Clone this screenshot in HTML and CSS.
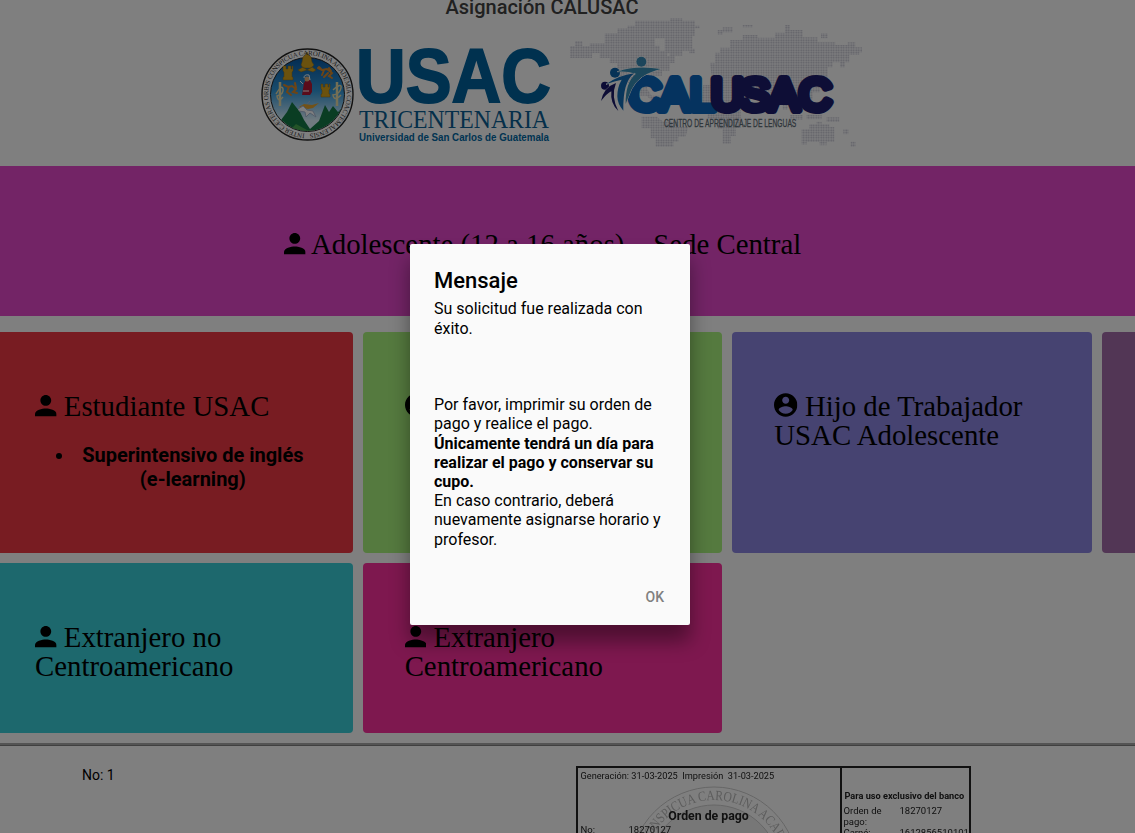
FILE: index.html
```html
<!DOCTYPE html>
<html lang="es">
<head>
<meta charset="utf-8">
<title>Asignación CALUSAC</title>
<link rel="stylesheet" href="styles.css">
</head>
<body>
<svg class="defs" width="0" height="0">
  <symbol id="person" viewBox="64 64 384 384"><path d="M256 256c52.805 0 96-43.201 96-96s-43.195-96-96-96-96 43.201-96 96 43.195 96 96 96zm0 48c-63.598 0-192 32.402-192 96v48h384v-48c0-63.598-128.402-96-192-96z"/></symbol>
  <symbol id="contact" viewBox="48 48 416 416"><path d="M256 48C141.1 48 48 141.1 48 256s93.1 208 208 208 208-93.1 208-208S370.9 48 256 48zm0 62.4c34.4 0 62.4 28 62.4 62.4s-28 62.4-62.4 62.4-62.4-28-62.4-62.4 28-62.4 62.4-62.4zm0 300.4c-52 0-97.8-26.7-124.6-67 .6-41.3 83.1-64 124.6-64s124 22.7 124.6 64c-26.8 40.3-72.6 67-124.6 67z"/></symbol>
</svg>
<main class="page">
  <header class="header">
    <h1 class="title">Asignación CALUSAC</h1>
    <div class="logos">
      <svg class="logo-usac" viewBox="258 44 296 100">
        <defs>
          <linearGradient id="sky" x1="0" y1="0" x2="0" y2="1"><stop offset="0" stop-color="#0759a5"/><stop offset=".45" stop-color="#3198da"/><stop offset=".85" stop-color="#e0f5ff"/></linearGradient>
          <path id="ring" d="M307.5 133.8a39.3 39.3 0 1 1 .1 0"/>
          <clipPath id="seal"><circle cx="307.5" cy="94.5" r="36.5"/></clipPath>
        </defs>
        <circle cx="307.5" cy="94.5" r="45.5" fill="#fff" stroke="#222" stroke-width="1.4"/>
        <circle cx="307.5" cy="94.5" r="37" fill="url(#sky)" stroke="#222"/>
        <g clip-path="url(#seal)">
          <path d="M272 132l15-20 5-10 8 10 4 8 6 9 9-8 6-16 4 7 4-6 5 6 3-3 8 12v20h-77z" fill="#157a46"/>
          <path d="M286 134l10-10 11 6 9 1-8 7h-15z" fill="#48a851"/>
        </g>
        <g fill="#d6a51c" stroke="#8c681c" stroke-width=".5">
          <path d="M302 62l1-5 3-3 1-2 1 2 3 3 1 5 2 3-3 3h-8l-2-3zM298 70l5-3 4 3 5-3 4 3-3 2-6-2-6 2z"/>
          <path d="M284 66h2v3h2v-3h3v3h1v-3h1v5l-1 1v5h1v3h-10v-3h1v-5l-1-1v-5zM321 84h2v3h2v-3h3v3h1v-3h1v5l-1 1v4h1v3h-9v-3h1v-4l-1-1z"/>
        </g>
        <g fill="none" stroke="#db8929" stroke-width="2" stroke-linecap="round">
          <path d="M318 68l4 2 5-1 5 4-3 3 3 2M324 70l-2 5M328 73l-4 4M319 67l2 2M329 68l2 3M284 85l4 2 4-1 4 3-3 3 4 1M289 87l-2 5 4 3M295 83l1 5"/>
        </g>
        <path d="M304 83l2-3h4l2 4v8l-2 3h-8l1-6z" fill="#b51837"/>
        <circle cx="307" cy="79" r="2.5" fill="#dfb17f"/><path d="M304 78q0-4 5-3l1 5M303 84l-3-3M303 91h6" fill="none" stroke="#fff" stroke-width="1"/>
        <path d="M299 107l5-3 8 1 7-2-6 5-5 1z" fill="#e5a52e"/><path d="M298 109l5-3 4 4 6 1 3 6-6-4-4 4-1-5-6-1M307 104l3-3" fill="#fff" stroke="#a5b8d5" stroke-width="1"/>
        <g fill="none" stroke="#e8deaa" stroke-width="2.500"><path d="M280 82v24M337 82v24"/><path d="M276 94q6-10 7-5t-6 7q1 7 6 1M333 90q9-8 8-2t-8 7q1 7 8 0" stroke-width="1.500"/></g>
        <text class="seal-text"><textPath href="#ring" startOffset="3" textLength="241">INTER CÆTERAS ORBIS CONSPICUA CAROLINA ACADEMIA COACTEMALENSIS</textPath></text>
        <text class="usac" x="356" y="102" textLength="195" lengthAdjust="spacingAndGlyphs">USAC</text>
        <text class="tri" x="359" y="127.500" textLength="190" lengthAdjust="spacingAndGlyphs">TRICENTENARIA</text>
        <text class="univ" x="359" y="141" textLength="190" lengthAdjust="spacingAndGlyphs">Universidad de San Carlos de Guatemala</text>
      </svg>
      <svg class="logo-cal" viewBox="18 54 900 390">
        <defs><pattern id="dots" x="30" y="57" width="7.500" height="7.500" patternUnits="userSpaceOnUse"><rect width="7.500" height="7.500" fill="#fafafe"/><circle cx="3.700" cy="3.700" r="2.600" fill="#bdbdca"/></pattern></defs>
        <g fill="url(#dots)">
          <path d="M30 138h15v-15h22v15h22v-8h45v-30h38v-15h30v-8h23v-15h105v-8h37v8h38v15h14v8h-14v22h-8v45h-30v15h-23v15h-15v-22h-15v-45h-30v22h15v15h22v15h23v22h-15v23h-23v15h-22v22h-23v22h-37l-15-22h-23l-15-30v-30h-22v-15h-30v-15h-23v15H30z"/>
          <path d="M230 265h30l15 22h30v15h-30l-15-15h-22z"/>
          <path d="M245 350h45l20 15h45v15h30l-8 30h-22v15h-15v15h-53v-25h-15v-30h-27z"/>
          <path d="M387 146h18v14h-18zM473 90h15v-8h30v15h-30v7h-15zM548 75h30v7h-30zM783 100h20v15h-20z"/>
          <path d="M450 188h15v-30h15v-15h30v-23h38v-15h45v8h52v-15h30v-23h15v15h38v22h45v15h53v8h37v-8h23v15h20v15h-8v8h-30v22h-13v15h-15v-15h-22v15h-15v45h-23v30h-22v22h-23v23h-30v-23h-22v30h-15v-30h-23v-15h-30v38h-15v-30h-22v-23h-38v15h-22v-22h-15v-23h-23v15h-22z"/>
          <path d="M430 255h23v-15h60v15h38v30h22v15h-15v30h-15v53h-15v25h-15v23h-25v-45h-15v-30h-30v-23h-23zM725 388h22v-15h23v-8h15v8h23v8h15v45h-23v10h-22v-10h-38v8h-15zM690 345h38v15h-38zM740 344h45v14h-45zM800 352h38v14h-38zM850 388h15v15h-15zM872 425h15v15h-15zM760 235h15v38h-15z"/>
        </g>
        <text class="cal blue" x="206 299 390" y="330">CAL</text>
        <text class="cal navy" x="453 540 626 717" y="330">USAC</text>
        <g class="cal-mark">
          <circle cx="244" cy="185" r="15" fill="#388bb7"/><circle cx="165" cy="218" r="15" fill="#0c64ad"/><circle cx="135" cy="257" r="12" fill="#19196c"/>
          <path d="M172 215q55-20 130-8-65 15-87 60-10 22-18 45-1-66 31-91-31-9-56-6z" fill="#388fb7"/>
          <path d="M138 253q37-27 85-33-35 25-33 112-18-20-18-43 0-28 13-50-20 4-47 14z" fill="#126cb6"/>
          <path d="M123 303q8-41 45-54-16 40 7 84-25-22-21-59-12 5-31 29z" fill="#1b1b6b"/>
        </g>
        <text class="tag" x="312" y="381" textLength="397" lengthAdjust="spacingAndGlyphs">CENTRO DE APRENDIZAJE DE LENGUAS</text>
      </svg>
    </div>
  </header>

  <section class="banner"><svg class="ico"><use href="#person"/></svg><span class="banner-text">Adolescente (12 a 16 años) – Sede Central</span></section>

  <section class="cards">
    <article class="card red"><h2 class="name"><svg class="ico"><use href="#person"/></svg> Estudiante USAC</h2>
      <ul class="list"><li>Superintensivo de inglés (e-learning)</li></ul></article>
    <article class="card green"><h2 class="name"><svg class="ico round"><use href="#contact"/></svg></h2></article>
    <article class="card blue-bg"><h2 class="name"><svg class="ico round"><use href="#contact"/></svg> Hijo de Trabajador USAC Adolescente</h2></article>
    <article class="card purple"></article>
    <article class="card teal"><h2 class="name"><svg class="ico"><use href="#person"/></svg> Extranjero no Centroamericano</h2></article>
    <article class="card pink"><h2 class="name"><svg class="ico"><use href="#person"/></svg> Extranjero Centroamericano</h2></article>
  </section>

  <section class="orders">
    <p class="number">No: 1</p>
    <div class="slip">
      <div class="slip-main">
        <svg class="watermark" viewBox="0 0 170 170"><defs><path id="wm" d="M85 156a71 71 0 1 1 .1 0"/></defs><circle cx="85" cy="85" r="84"/><circle cx="85" cy="85" r="66" class="wm-fill"/><text><textPath href="#wm" startOffset="6" textLength="434" lengthAdjust="spacingAndGlyphs">INTER CÆTERAS ORBIS CONSPICUA CAROLINA ACADEMIA COACTEMALENSIS</textPath></text></svg>
        <p class="dates">Generación: 31-03-2025 &nbsp;Impresión &nbsp;31-03-2025</p>
        <p class="slip-title">Orden de pago</p>
        <p class="row"><span class="key">No:</span><span>18270127</span></p>
      </div>
      <div class="slip-bank">
        <p class="bank-title">Para uso exclusivo del banco</p>
        <p class="row"><span class="key">Orden de pago:</span><span>18270127</span></p>
        <p class="row"><span class="key">Carné:</span><span>1612856510101</span></p>
      </div>
    </div>
  </section>
</main>

<div class="backdrop">
  <div class="dialog" role="dialog">
    <h2 class="dialog-title">Mensaje</h2>
    <p class="lead">Su solicitud fue realizada con éxito.</p>
    <p class="msg">Por favor, imprimir su orden de pago y realice el pago.</p>
    <p class="msg strong">Únicamente tendrá un día para realizar el pago y conservar su cupo.</p>
    <p class="msg">En caso contrario, deberá nuevamente asignarse horario y profesor.</p>
    <button class="ok">OK</button>
  </div>
</div>
</body>
</html>
```
FILE: styles.css
```css
* { box-sizing: border-box; }
body { margin: 0; height: 833px; overflow: hidden; background: #fff; font-family: Roboto, sans-serif; color: #000; }
h1, h2, p, ul { margin: 0; }
.defs { position: absolute; }
.page { height: 833px; overflow: hidden; }
.header { height: 166px; }
.title { width: 1084px; height: 18px; line-height: 24px; text-align: center; font-size: 20px; font-weight: 500; color: #424242; transform: translateY(-5px); }
.logos { display: flex; align-items: flex-start; gap: 12px; padding-left: 258px; }
.logo-usac { width: 296px; height: 100px; margin-top: 26px; }
.logo-cal { width: 300px; height: 130px; }
.seal-text { font: 6.800px "Liberation Serif", serif; fill: #333; }
.usac { font: bold 76px "Liberation Sans", sans-serif; fill: #00639f; stroke: #00639f; stroke-width: 1.800px; }
.tri { font: 25px "Liberation Serif", serif; fill: #0a5f95; }
.univ { font: bold 10px "Liberation Sans", sans-serif; fill: #0068a5; }
.cal { font: 135px "Liberation Sans", sans-serif; stroke-width: 24px; stroke-linejoin: round; stroke-linecap: round; }
.blue { fill: #0b67be; stroke: #0b67be; }
.navy { fill: #1c1c6c; stroke: #1c1c6c; }
.cal-mark { stroke: #fff; stroke-width: 3px; paint-order: stroke; }
.tag { font: 35px "Liberation Sans", sans-serif; fill: #5c6a74; stroke: #5c6a74; stroke-width: .8px; }
.banner { height: 150px; padding-top: 64px; padding-left: 284px; background: #e648cc; font: 28.800px/29px "Liberation Serif", serif; white-space: nowrap; }
.banner-text { margin-left: 5.400px; }
.ico { width: 21.600px; height: 21.600px; vertical-align: -.6px; }
.round { width: 23.400px; height: 24px; vertical-align: -1.400px; }
.cards { display: grid; grid-template-columns: repeat(4, 359.670px); grid-template-rows: 221px 170px; gap: 10px; margin: 16px 0 10px -7px; }
.card { padding: 60px 42px; border-radius: 4px; }
.name { font: 28.800px/29px "Liberation Serif", serif; }
.list { padding-left: 40px; margin-top: 22px; font-size: 20px; font-weight: 700; line-height: 24px; text-align: center; }
.red { background: #f03844; }
.green { background: #aaf47e; }
.blue-bg { background: #8c86e2; }
.purple { background: #a46caa; }
.teal { background: #3ad0da; }
.pink { background: #fc309e; }
.orders { display: flex; height: 90px; padding: 1px 0 0 82px; border-top: 2px solid #a8a8a8; box-shadow: inset 0 1px #808080; }
.number { width: 493.500px; font-size: 14px; line-height: 20px; padding-top: 19px; }
.slip { display: flex; flex: none; width: 395.500px; height: 200px; margin-top: 20px; border: 2px solid #222; font-size: 9.500px; line-height: 11px; color: #222; filter: blur(.5px); }
.slip-main { position: relative; flex: none; width: 264px; border-right: 2px solid #222; padding: 2px 3px; }
.watermark { position: absolute; left: 51px; top: 18px; width: 170px; height: 170px; fill: none; stroke: #ccc; }
.watermark text { font: 14px "Liberation Serif", serif; fill: #bbb; stroke: none; }
.wm-fill { fill: #eee; }
.dates { position: relative; font-size: 9.200px; white-space: nowrap; }
.slip-title { position: relative; margin-top: 27px; font-size: 12.300px; line-height: 16px; font-weight: 700; text-align: center; }
.row { position: relative; display: flex; }
.slip-main .key { width: 48px; }
.slip-bank { padding: 22px 2px; }
.bank-title { margin-bottom: 4px; padding-left: 1px; font-weight: 700; font-size: 9.200px; white-space: nowrap; }
.slip-bank .key { flex: none; width: 56px; padding-right: 12px; }
.backdrop { position: absolute; inset: 0; background: rgba(0, 0, 0, .5); }
.dialog { position: absolute; left: 410px; top: 244px; width: 280px; height: 381px; padding: 24px; background: #fafafa; border-radius: 2px; box-shadow: 0 16px 20px rgba(0, 0, 0, .4); }
.dialog-title { font-size: 22px; line-height: 26px; font-weight: 500; }
.lead { margin: 5px 0 57.200px; font-size: 16px; line-height: 19.500px; }
.msg { font-size: 16px; line-height: 19.200px; }
.ok { display: block; margin: 29.800px 0 0 auto; padding: 10px 2px; border: 0; background: none; font: 500 14px/16px Roboto, sans-serif; color: #808080; }
.strong { font-weight: 700; }
```
